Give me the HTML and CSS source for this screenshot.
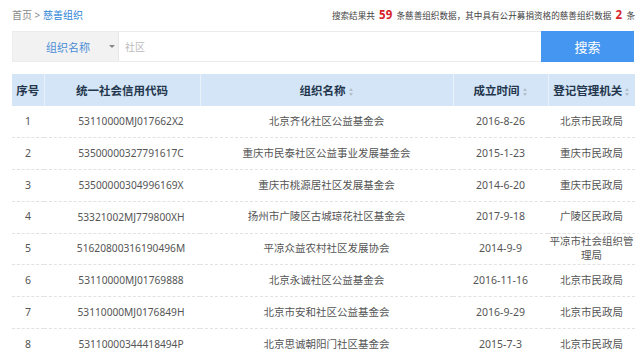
FILE: index.html
```html
<!DOCTYPE html>
<html lang="zh-CN">
<head>
  <meta charset="UTF-8" />
  <meta name="viewport" content="width=device-width, initial-scale=1.0" />
  <title>慈善组织</title>
  <link rel="stylesheet" href="styles.css">
</head>
<body>
  <div class="top">
    <div class="crumb">首页 &gt; <a href="#">慈善组织</a></div>
    <div class="summary">搜索结果共 <b>59</b> 条慈善组织数据，其中具有公开募捐资格的慈善组织数据 <b>2</b> 条</div>
  </div>

  <div class="search">
    <div class="select">组织名称 <span class="caret"></span></div>
    <input type="text" value="" placeholder="社区">
    <button>搜索</button>
  </div>

  <table class="list">
    <colgroup>
      <col class="c-no"><col class="c-code"><col class="c-name"><col class="c-date"><col class="c-org">
    </colgroup>
    <thead>
      <tr>
        <th>序号</th>
        <th>统一社会信用代码</th>
        <th>组织名称<span class="sort"></span></th>
        <th>成立时间<span class="sort"></span></th>
        <th>登记管理机关<span class="sort"></span></th>
      </tr>
    </thead>
    <tbody id="rows"></tbody>
  </table>

  <script>
    const data = [
      ['53110000MJ017662X2', '北京齐化社区公益基金会', '2016-8-26', '北京市民政局'],
      ['53500000327791617C', '重庆市民泰社区公益事业发展基金会', '2015-1-23', '重庆市民政局'],
      ['53500000304996169X', '重庆市桃源居社区发展基金会', '2014-6-20', '重庆市民政局'],
      ['53321002MJ779800XH', '扬州市广陵区古城琼花社区基金会', '2017-9-18', '广陵区民政局'],
      ['51620800316190496M', '平凉众益农村社区发展协会', '2014-9-9', '平凉市社会组织管理局'],
      ['53110000MJ01769888', '北京永诚社区公益基金会', '2016-11-16', '北京市民政局'],
      ['53110000MJ0176849H', '北京市安和社区公益基金会', '2016-9-29', '北京市民政局'],
      ['53110000344418494P', '北京思诚朝阳门社区基金会', '2015-7-3', '北京市民政局']
    ];

    const tbody = document.getElementById('rows');
    data.forEach((r, i) => {
      const tr = document.createElement('tr');
      [i + 1, ...r].forEach(v => {
        const td = document.createElement('td');
        td.textContent = v;
        tr.appendChild(td);
      });
      tbody.appendChild(tr);
    });
  </script>
</body>
</html>
```

FILE: styles.css
```css
* {
  margin: 0;
  padding: 0;
  box-sizing: border-box;
}

body {
  font-family: "Noto Sans", "Noto Sans CJK SC", sans-serif;
  background: #fff;
  color: #555;
  padding: 0 5px 0 12px;
  overflow: hidden;
}

.top {
  display: flex;
  justify-content: space-between;
  align-items: center;
  height: 28px;
  padding-top: 1px;
  font-size: 10px;
}

.crumb {
  color: #888;
}

.crumb a {
  color: #2f86d6;
  text-decoration: none;
}

.summary {
  color: #444;
  font-size: 8.6px;
}

.summary b {
  color: #d8232a;
  font-size: 11.5px;
  margin: 0 2px;
}

.search {
  display: flex;
  height: 31px;
  margin-top: 3px;
  margin-right: 1px;
  border: 1px solid #ececec;
  border-right: none;
}

.select {
  width: 106px;
  background: #f2f2f2;
  color: #4b8fd6;
  font-size: 11px;
  display: flex;
  align-items: center;
  padding-left: 33px;
  border-right: 1px solid #e6e6e6;
}

.caret {
  margin-left: 19px;
  border-left: 3px solid transparent;
  border-right: 3px solid transparent;
  border-top: 3px solid #888;
}

.search input {
  flex: 1;
  border: none;
  outline: none;
  padding-left: 6px;
  font-family: inherit;
  font-size: 10px;
}

.search input::placeholder {
  color: #bbb;
}

.search button {
  width: 93px;
  border: none;
  background: #4596f0;
  color: #fff;
  font-family: inherit;
  font-size: 13px;
  margin: -1px 0;
}

.list {
  width: 623px;
  margin-top: 12px;
  border-collapse: collapse;
  table-layout: fixed;
  font-size: 10.5px;
  text-align: center;
}

.c-no { width: 32px; }
.c-code { width: 156px; }
.c-name { width: 253px; }
.c-date { width: 95px; }
.c-org { width: 87px; }

.list th {
  height: 32px;
  background: #d3e5f6;
  color: #23364d;
  font-size: 11.5px;
  font-weight: bold;
  border-left: 1px solid #e9f1f9;
}

.list th:first-child {
  border-left: none;
}

.list td {
  height: 31.8px;
  border-bottom: 1px dashed #e2e2e2;
  line-height: 1.3;
}

.list td:nth-child(2) {
  padding-left: 18px;
  font-size: 10.2px;
}

.list td:last-child {
  padding: 0 1px;
}

.sort {
  display: inline-block;
  position: relative;
  width: 5px;
  height: 8px;
  margin-left: 3px;
  vertical-align: -1px;
}

.sort::before,
.sort::after {
  content: "";
  position: absolute;
  left: 0;
  border-left: 2.5px solid transparent;
  border-right: 2.5px solid transparent;
}

.sort::before {
  top: 0;
  border-bottom: 3px solid #b4bfcc;
}

.sort::after {
  bottom: 0;
  border-top: 3px solid #b4bfcc;
}
```
